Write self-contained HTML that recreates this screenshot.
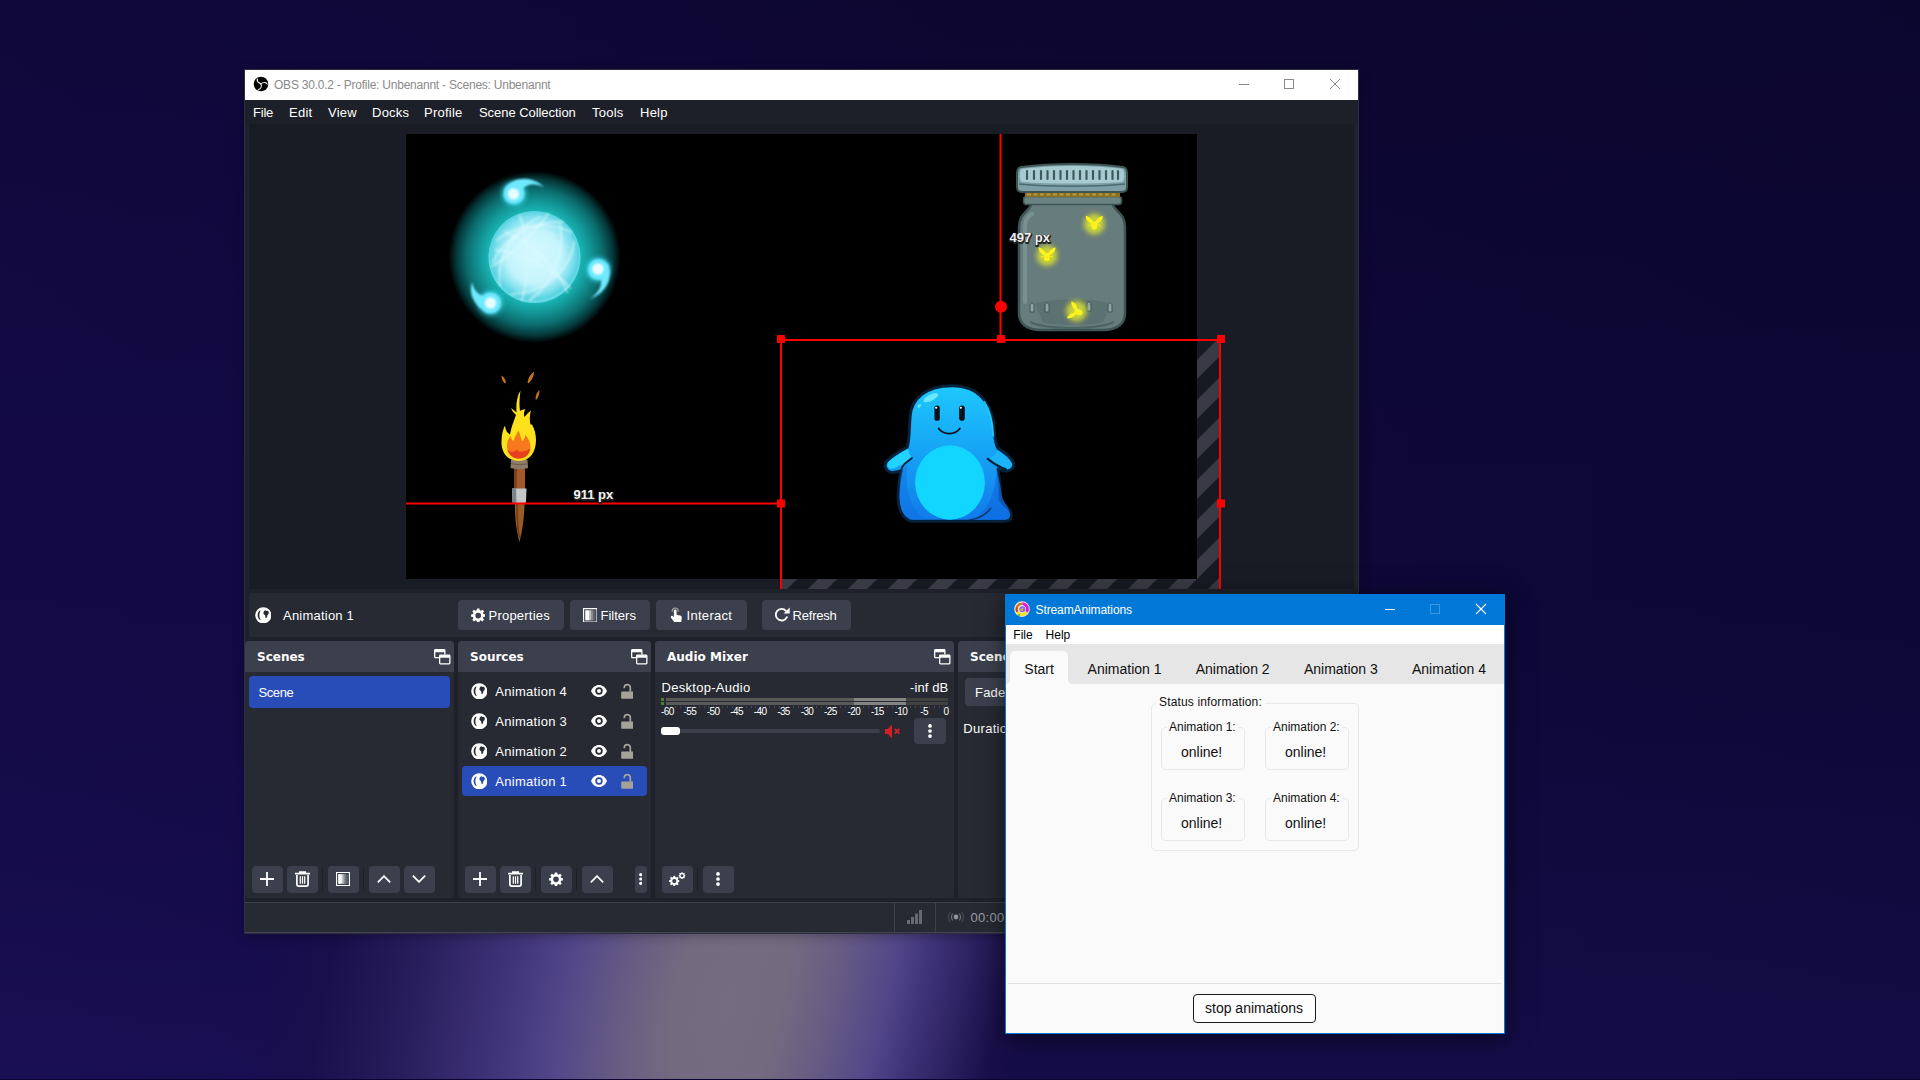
<!DOCTYPE html>
<html lang="en">
<head>
<meta charset="utf-8">
<title>OBS 30.0.2 - StreamAnimations</title>
<style>
*{box-sizing:border-box;margin:0;padding:0}
html,body{width:1920px;height:1080px;overflow:hidden}
body{position:relative;background:#0e0736;font-family:"Liberation Sans",sans-serif;color:#fff}
.abs,.t,.btn,.tb,.dock,.dtitle{position:absolute}
.t{white-space:nowrap;line-height:1}
/* desktop */
#desk{position:absolute;left:0;top:0;width:1920px;height:1080px;overflow:hidden;
 background:linear-gradient(to bottom, rgba(5,2,20,.22) 0, rgba(5,2,20,0) 45%, rgba(60,45,170,0) 55%, rgba(60,45,170,.13) 100%),linear-gradient(to right, #130a45 0, #120943 20%, #0f0839 50%, #0d0736 100%);}
#beam{position:absolute;left:226px;top:105px;width:1000px;height:1800px;transform:rotate(14deg)}
#beamL{position:absolute;left:0;top:0;width:502px;height:1800px;background:radial-gradient(ellipse 450px 880px at 500px 50%, #756c81 0, #736a80 12%, #675d83 22%, #524689 36%, #3f3378 49%, #2a1f5e 67%, rgba(28,17,73,.5) 88%, rgba(19,10,64,0) 100%)}
#beamR{position:absolute;left:500px;top:0;width:500px;height:1800px;background:radial-gradient(ellipse 300px 880px at 0% 50%, #756c81 0, #736a80 18%, #675d83 33%, #524689 52%, #3f3378 63%, #2a1f5e 78%, rgba(28,17,73,.5) 90%, rgba(17,9,60,0) 100%)}
#deskline{position:absolute;left:0;top:1079px;width:1920px;height:1px;background:#0c0432}
/* OBS window */
#obs{overflow:hidden;position:absolute;left:244px;top:69px;width:1115px;height:865px;background:#1f212a;border:1px solid #2c2e40;box-shadow:0 2px 10px rgba(0,0,0,.28)}
#obs .in{position:absolute;left:-245px;top:-70px;width:1920px;height:1080px}
.obt{font-size:13px;color:#fefefe;letter-spacing:.25px}
.dock{background:#272a33;border-radius:4px}
.dtitle{background:#3c404d;border-radius:4px 4px 0 0;height:31px;left:0;top:0;width:100%}
.dt{font-family:"DejaVu Sans",sans-serif;font-weight:bold;font-size:12px;color:#fefefe}
.ml{font-size:10px;color:#fefefe;letter-spacing:-.6px}
.btn{background:#3c404d;border-radius:4px}
.tb{background:#3c404d;border-radius:4px;width:31px;height:27px;top:866px}
.sep{position:absolute;width:1px;background:#1d1f27;top:868px;height:23px}
/* StreamAnimations */
#sa{overflow:hidden;position:absolute;left:1005px;top:594px;width:500px;height:440px;background:#fafafa;border:1px solid #0078d7;box-shadow:0 4px 22px rgba(0,0,0,.55)}
#sa .in{position:absolute;left:-1006px;top:-595px;width:1920px;height:1080px;color:#111}
</style>
</head>
<body>
<div id="desk"><div id="beam"><div id="beamL"></div><div id="beamR"></div></div><div id="deskline"></div></div>
<svg width="0" height="0" style="position:absolute"><defs>
<symbol id="i-globe" viewBox="0 0 17 17"><path fill-rule="evenodd" d="M8.500.200a8.300 8.300 0 1 0 0 16.600a8.300 8.300 0 1 0 0-16.600zM4.400 3.900C2.100 6.700 2.100 10.500 4.800 13.100L6 13.100C4 10.300 4 6.800 5.700 3.900zM9.300 4.100L10.800 3.300L12.200 4.200L13.300 3.800L14.300 6L13.500 7.700L12.700 8.300L12.300 10.800L10.900 11.200L10.300 8.500L8.600 7L8.800 5.300z"/></symbol>
<symbol id="i-gear" viewBox="0 0 16 16"><path fill-rule="evenodd" d="M6.700.500h2.600l.4 2.100l1.200.5l1.800-1.200l1.800 1.800l-1.200 1.800l.5 1.200l2.100.4v2.600l-2.100.4l-.5 1.200l1.200 1.800l-1.800 1.800l-1.800-1.200l-1.200.5l-.4 2.100H6.700l-.4-2.100l-1.200-.5l-1.800 1.200l-1.800-1.800l1.200-1.800l-.5-1.200L.1 9.700V7.100l2.100-.4l.5-1.200l-1.200-1.800l1.800-1.800l1.800 1.200l1.200-.5zM8 5.200a3.200 3.200 0 1 0 0 6.400a3.200 3.200 0 1 0 0-6.400z"/></symbol>
<symbol id="i-filter" viewBox="0 0 15 15"><path fill-rule="evenodd" d="M0 0h15v15H0zM1.200 1.200v12.600h12.600V1.200z"/><rect x="2.300" y="2.300" width="4" height="10.400"/><rect x="6.300" y="2.300" width="2" height="10.400" opacity=".7"/><rect x="8.300" y="2.300" width="2" height="10.400" opacity=".4"/><rect x="10.300" y="2.300" width="2.400" height="10.400" opacity=".18"/></symbol>
<symbol id="i-hand" viewBox="0 0 14 17"><path d="M4.200 4.200a1.500 1.500 0 0 1 3 0v4.300l3.800.8c1.300.3 2 1.100 1.900 2.400l-.5 4.300c-.1.500-.4.800-.9.800H5.600c-.5 0-.9-.2-1.200-.6L1.100 11.800c-.5-.7-.3-1.500.3-1.900c.6-.4 1.300-.3 1.800.2l1 1z"/><path d="M2.500 5.200a3.300 3.300 0 1 1 6.400 0" fill="none" stroke-width="1.300" stroke="currentColor" opacity=".55"/></symbol>
<symbol id="i-refresh" viewBox="0 0 17 16"><path d="M13.300 10.500A6 6 0 1 1 12.300 3.900" fill="none" stroke="currentColor" stroke-width="1.900" stroke-linecap="round"/><path d="M16.200.500v6.200h-6.200z"/></symbol>
<symbol id="i-float" viewBox="0 0 17 16"><g fill="none" stroke="currentColor" stroke-width="1.300"><rect x=".65" y=".65" width="10.200" height="8" rx=".8"/></g><rect x=".65" y=".65" width="10.200" height="2.600"/><rect x="5" y="5.500" width="11.500" height="10" rx="1" fill="#3c404d"/><g fill="none" stroke="currentColor" stroke-width="1.300"><rect x="5.650" y="6.150" width="10.200" height="8.700" rx=".8"/></g><rect x="5.650" y="6.150" width="10.200" height="2.600"/></symbol>
<symbol id="i-eye" viewBox="0 0 16 12"><path fill-rule="evenodd" d="M8 0C4.400 0 1.500 2.300 0 6c1.500 3.700 4.400 6 8 6s6.500-2.300 8-6C14.500 2.300 11.600 0 8 0zM8 2.300a3.700 3.700 0 1 0 0 7.400a3.700 3.700 0 1 0 0-7.400z"/><circle cx="8" cy="6" r="2"/></symbol>
<symbol id="i-lock" viewBox="0 0 13 16"><rect x=".2" y="8.500" width="12.600" height="7.500" rx="1"/><path d="M3.400 5.200V4.500a3.100 3.100 0 0 1 6.200 0v4.500" fill="none" stroke="currentColor" stroke-width="1.800"/></symbol>
<symbol id="i-plus" viewBox="0 0 14 14"><path d="M7 0v14M0 7h14" stroke="currentColor" stroke-width="1.800" fill="none"/></symbol>
<symbol id="i-trash" viewBox="0 0 15 16"><path d="M0 2.600h15M4.800 2.600V1h5.400v1.600" fill="none" stroke="currentColor" stroke-width="1.700"/><path d="M1.900 4v9.200c0 1.100.7 1.900 1.900 1.900h7.400c1.200 0 1.900-.8 1.900-1.900V4" fill="none" stroke="currentColor" stroke-width="1.700"/><path d="M5.300 5.300v7.400M7.500 5.300v7.400M9.700 5.300v7.400" stroke="currentColor" stroke-width="1.250"/></symbol>
<symbol id="i-up" viewBox="0 0 14 8"><path d="M.800 7.300L7 1.100l6.200 6.200" fill="none" stroke="currentColor" stroke-width="1.700"/></symbol>
<symbol id="i-down" viewBox="0 0 14 8"><path d="M.800.700L7 6.900L13.200.700" fill="none" stroke="currentColor" stroke-width="1.700"/></symbol>
<symbol id="i-dots" viewBox="0 0 4 14"><circle cx="2" cy="1.900" r="1.850"/><circle cx="2" cy="7" r="1.850"/><circle cx="2" cy="12.100" r="1.850"/></symbol>
<symbol id="i-gears" viewBox="0 0 17 14"><g transform="translate(0 3.500) scale(.66)"><use href="#i-gear" width="16" height="16"/></g><g transform="translate(9.500 0) scale(.44)"><use href="#i-gear" width="16" height="16"/></g></symbol>
<symbol id="i-mute" viewBox="0 0 16 15"><path d="M0 5h2.800L7 .500v14L2.800 10H0z" fill="#d21f28"/><path d="M9.800 5l4.600 4.600M14.400 5L9.800 9.600" stroke="#d21f28" stroke-width="1.900" fill="none"/></symbol>
</defs></svg>

<div id="obs"><div class="in">
<!--OBS-TITLE-->
<div class="abs" style="left:245px;top:70px;width:1113px;height:30px;background:#fff"></div>
<svg class="abs" style="left:253px;top:76px" width="16" height="16" viewBox="0 0 16 16"><circle cx="8" cy="8" r="7.300" fill="#050505"/><g fill="none" stroke="#e4e4e4" stroke-width="1.300" stroke-linecap="round"><path d="M8 8C7 7 5 6.500 4.500 5.500C4.300 4.800 4.300 4 4.400 3.200"/><path d="M8 8C9 6.800 11 6.400 12.500 6.600C13.500 6.800 14 7.500 14.200 8.200" stroke-width="1.100"/><path d="M8 8C8.500 9.500 8.600 10.500 8 11.500C7.300 12.600 6.300 13.300 5.200 13.800" stroke-width="1.100"/></g></svg>
<div class="t" id="obstitle" style="left:274px;top:79px;font-size:12px;color:#8a8a8a;letter-spacing:-.23px">OBS 30.0.2 - Profile: Unbenannt - Scenes: Unbenannt</div>
<svg class="abs" style="left:1234px;top:74px" width="112" height="20" viewBox="0 0 112 20" fill="none" stroke="#8a8a8a" stroke-width="1"><path d="M5 10.500h10"/><rect x="50.500" y="5.500" width="9" height="9"/><path d="M96 5l10 10M106 5l-10 10"/></svg>
<div class="abs" style="left:245px;top:100px;width:1113px;height:24px;background:#1e2029"></div>
<div class="t obt m" style="left:253px;top:106px;letter-spacing:-.2px">File</div>
<div class="t obt m" style="left:289px;top:106px">Edit</div>
<div class="t obt m" style="left:328px;top:106px">View</div>
<div class="t obt m" style="left:372px;top:106px">Docks</div>
<div class="t obt m" style="left:424px;top:106px">Profile</div>
<div class="t obt m" style="left:479px;top:106px;letter-spacing:-.05px">Scene Collection</div>
<div class="t obt m" style="left:592px;top:106px">Tools</div>
<div class="t obt m" style="left:640px;top:106px">Help</div>
<!--OBS-PREVIEW-->
<svg class="abs" style="left:245px;top:124px" width="1113" height="465" viewBox="245 124 1113 465">
<defs>
<pattern id="hatch" patternUnits="userSpaceOnUse" width="40" height="40" patternTransform="translate(37 0)"><rect width="40" height="40" fill="#181a23"/><path d="M0 0h19L0 19zM40 0v19L19 40H0z" fill="#393a45"/></pattern>
<radialGradient id="glow" cx="50%" cy="50%" r="50%"><stop offset="0" stop-color="#1cc0c0"/><stop offset=".54" stop-color="#18b2b2"/><stop offset=".66" stop-color="#129394"/><stop offset=".79" stop-color="#0c6c6e"/><stop offset=".91" stop-color="#05383a"/><stop offset="1" stop-color="#000"/></radialGradient>
<radialGradient id="orb" cx="50%" cy="48%" r="50%"><stop offset="0" stop-color="#d6f9ff"/><stop offset=".6" stop-color="#b2effa"/><stop offset=".84" stop-color="#7fe0ed"/><stop offset=".95" stop-color="#5ad3e1"/><stop offset="1" stop-color="#66d9e6"/></radialGradient>
<filter id="b1" x="-50%" y="-50%" width="200%" height="200%"><feGaussianBlur stdDeviation="1.200"/></filter>
<filter id="b2" x="-50%" y="-50%" width="200%" height="200%"><feGaussianBlur stdDeviation="2.500"/></filter>
<filter id="b4" x="-100%" y="-100%" width="300%" height="300%"><feGaussianBlur stdDeviation="4"/></filter>
<linearGradient id="slime" x1="0" y1="0" x2="0" y2="1"><stop offset="0" stop-color="#1ec8fc"/><stop offset=".45" stop-color="#17a6f6"/><stop offset="1" stop-color="#1279ea"/></linearGradient>
</defs>
<rect x="245" y="124" width="1113" height="465" fill="#20222b"/><rect x="249" y="124" width="1105" height="465" fill="#191b25"/>
<rect x="406" y="134" width="791" height="445" fill="#000"/>
<path d="M1197 341h22v248H782v-10h415z" fill="url(#hatch)"/>
<!--ORB-->
<circle cx="534.500" cy="257" r="86" fill="url(#glow)"/>
<circle cx="534.500" cy="257" r="46" fill="url(#orb)"/>
<g fill="none" stroke="#e9fdff" stroke-opacity=".5" stroke-width="2.200" stroke-linecap="round" filter="url(#b1)">
<path d="M497 240c18-14 50-20 74-8"/><path d="M493 262c10-22 40-42 70-40"/><path d="M500 285c-4-28 14-56 40-68"/>
<path d="M512 294c26 0 58-20 62-52"/><path d="M530 300c20-14 36-44 30-76"/><path d="M505 232c22 8 52 34 62 60"/>
<path d="M496 250c30 4 62 22 74 38"/><path d="M520 216c8 26 10 58 2 84"/><path d="M548 214c-14 20-40 44-56 52"/>
</g>
<circle cx="534.500" cy="257" r="30" fill="#d6f9ff" opacity=".55" filter="url(#b4)"/>
<g filter="url(#b2)" fill="#3fe0f8" opacity=".75"><circle cx="514" cy="193.500" r="12"/><circle cx="598.500" cy="269.500" r="12"/><circle cx="490.500" cy="303" r="12"/></g>
<g filter="url(#b1)">
<g fill="#6eeaff"><circle cx="514" cy="193.500" r="10.500"/><path d="M505 188c8-11 26-13 39-1c-9-4-18-4-24 5z"/></g>
<circle cx="513.500" cy="194" r="5.500" fill="#e8fdff"/>
<g fill="#6eeaff"><circle cx="598.500" cy="269.500" r="10.500"/><path d="M608 263c5 14 0 29-18 36c9-7 12-13 11-21z"/></g>
<circle cx="598" cy="269" r="5.500" fill="#e8fdff"/>
<g fill="#6eeaff"><circle cx="490.500" cy="303" r="10.500"/><path d="M481 309c-9-8-12-17-9-27c2 9 7 14 16 15z"/></g>
<circle cx="490.500" cy="303" r="5.500" fill="#e8fdff"/>
</g>
<!--JAR-->
<g>
<!-- body -->
<path d="M1032 203h80c2 8 13 10 13 24v86c0 10-6 16-20 17h-66c-14-1-20-7-20-17v-86c0-14 11-16 13-24z" fill="#677c7c" stroke="#3e5555" stroke-width="2.500"/>
<path d="M1032 214c-6 3-7 8-7 16v72" fill="none" stroke="#7f9696" stroke-width="4" stroke-linecap="round" opacity=".8"/>
<path d="M1035 304c10-6 64-6 76 0l-8 18c-12 4-48 4-60 0z" fill="#5b7070" opacity=".9"/>
<g fill="#8ea4a4" stroke="#3e5555" stroke-width="1"><path d="M1030 312v-6c0-4 4-4 4 0v6zM1045 312v-6c0-4 4-4 4 0v6zM1073 311v-6c0-4 4-4 4 0v6zM1087 311v-6c0-4 4-4 4 0v6zM1108 312v-6c0-4 4-4 4 0v6z"/></g>
<path d="M1030 322c18 8 66 8 84 0" fill="none" stroke="#4d6464" stroke-width="2"/>
<!-- neck ring -->
<rect x="1023.500" y="196.500" width="98" height="8" rx="3" fill="#6b8383" stroke="#3e5555" stroke-width="1.500"/>
<!-- gold band -->
<rect x="1025" y="192" width="95" height="5" fill="#8a6f23"/>
<path d="M1027 194.500h91" stroke="#b79a3a" stroke-width="2" stroke-dasharray="4 2.500"/>
<!-- lid -->
<path d="M1021 167c30-4 74-4 102 0c4 1 4 4 4 8v12c0 4-2 5-6 5h-98c-4 0-6-1-6-5v-12c0-4 0-7 4-8z" fill="#7e9fa5" stroke="#3e5555" stroke-width="2"/>
<path d="M1022 169c30-4 72-4 100 0c3 1 3 12 0 13c-30 2-70 2-100 0c-3-1-3-12 0-13z" fill="#a6ccd2"/>
<path d="M1019 184c30 3 76 3 106 0" fill="none" stroke="#4c6b70" stroke-width="1.500"/>
<path d="M1027 171v8M1034 171v8M1041 171v8M1047.500 171v8M1054 171v8M1060.500 171v8M1067 171v8M1073.500 171v8M1080 171v8M1086.500 171v8M1093 171v8M1099.500 171v8M1106 171v8M1112.500 171v8M1118 171v8" stroke="#3e5a5e" stroke-width="2.200" stroke-linecap="round"/>
<!-- fireflies -->
<g filter="url(#b2)" fill="#d8e032" opacity=".85"><circle cx="1094.300" cy="224" r="10.500"/><circle cx="1047" cy="255.500" r="10.500"/><circle cx="1076.500" cy="311" r="10.500"/></g>
<g fill="#fff21c">
<g transform="translate(1094.300 223)"><ellipse cx="0" cy="2.500" rx="3" ry="4.200"/><path d="M-1-1c-3-5-6-6-7.500-6c0 4 3 7 7 8zM1-1c3-5 6-6 7.500-6c0 4-3 7-7 8z"/><path d="M-2.500 1.500l-3.500 1M2.500 1.500l3.500 1" stroke="#fff21c" stroke-width="1"/></g>
<g transform="translate(1047 254.500)"><ellipse cx="0" cy="2.500" rx="3" ry="4.200"/><path d="M-1-1c-3-5-6-6-7.500-6c0 4 3 7 7 8zM1-1c3-5 6-6 7.500-6c0 4-3 7-7 8z"/><path d="M-2.500 1.500l-3.500 1M2.500 1.500l3.500 1" stroke="#fff21c" stroke-width="1"/></g>
<g transform="translate(1076 311.500) rotate(-75)"><ellipse cx="0" cy="2.500" rx="3" ry="4.200"/><path d="M-1-1c-3-5-6-6-7.500-6c0 4 3 7 7 8zM1-1c3-5 6-6 7.500-6c0 4-3 7-7 8z"/></g>
</g>
</g>
<!--TORCH-->
<g>
<path d="M515 504l9.500 0c0 12-2 26-5 38c-3-10-5-26-4.500-38z" fill="#9a5a26"/>
<path d="M517 504c0 12 .5 24 2.500 34" stroke="#6f3d18" stroke-width="1.500" fill="none"/>
<rect x="514" y="468" width="11" height="21" fill="#a4592b"/>
<rect x="514" y="468" width="3" height="21" fill="#7d401c"/>
<path d="M512 488.500h14.500l-.5 14c-4 1.500-9.500 1.500-13.500 0z" fill="#c3c8cc"/>
<path d="M512 488.500h4l.5 15c-2-.3-3-.6-4-1z" fill="#7c8389"/>
<path d="M511 460c4-1.500 12.500-1.500 16.500 0l.5 8c-5 1.500-12.500 1.500-17.500 0z" fill="#8b7b68"/>
<path d="M511 463.500c5 1.500 12 1.500 17 0" stroke="#6a5c4c" stroke-width="1" fill="none"/>
<!-- flame -->
<path d="M519 461C507 461 501 452 501.500 441C501.800 434 503 429 505 425.500C505.500 430 507 433 510 434.500C511 427 514 421 516 415C514 413 512 411 511 408C513 409.500 515 411 516.500 412.500C516 405 516.500 397 520.500 390.500C519.500 397 519 404 520 411C521.500 410 523.500 409.500 525.500 409C524 411.500 523.500 414 524.500 417C526.500 414.500 528.500 412.500 531 410.500C529.500 415 529.500 420 530.500 424.500C531 424.500 531.500 424.500 532 424.500C534.500 429 536 434 536 440C536 452 530 461 519 461Z" fill="#fde11c"/>
<path d="M519 458.500C511 458.500 507 452.500 507 446C507 441.500 508.500 438.500 510.500 436C511 438.500 512 440 513.500 441C514.500 437 517 434 518.500 430.500C520.500 434.500 520.500 438.500 522.500 441.500C524 439.500 525 437.500 525.500 435C528.500 438.500 530.500 442 530.500 447C530.500 453 526.500 458.500 519 458.500Z" fill="#f7781d"/>
<path d="M519 458.500C512 458.500 508.500 454 507.500 449.500C510.500 453 514 452.500 516.500 449.500C519 452.500 524 453 530 448.500C529.500 454 526 458.500 519 458.500Z" fill="#e9401f"/>
<path d="M501.500 375.500c2.500 1.500 4 4 4.500 7.500l-1.500 0c-2-2-3-4.500-3-7.500zM534 371.500c-3.500 2.500-6 6.500-6.500 11.500l1.500 0c3-3 5-7 5-11.500zM539.500 390c-2.500 2-4 5-4 9.500l1 0c2-2.500 3-5.500 3-9.500z" fill="#c1761b"/>
</g>
<!--SLIME-->
<g transform="translate(860 370) scale(.15734)">
<path d="M585 100C760 100 850 220 855 400C858 440 862 470 875 495C915 520 965 560 975 590C985 625 950 650 910 640C895 636 885 632 878 628C885 690 895 750 890 810C888 830 900 845 920 860C945 880 962 900 962 925C962 950 945 962 915 962L330 962C270 950 240 880 242 800C244 740 250 690 262 640C235 650 215 655 195 650C160 640 150 605 170 580C195 550 245 520 300 490C315 440 312 380 318 300C325 180 420 100 585 100Z" fill="url(#slime)" stroke="#05223a" stroke-width="19" stroke-linejoin="round"/>
<path d="M870 630C885 700 898 770 903 805C912 840 945 870 952 905C955 940 935 952 900 952L700 952C800 920 860 800 870 630Z" fill="#0f6ee0" opacity=".75"/>
<path d="M262 640C255 690 250 740 250 800C250 870 280 940 335 952L420 952C330 900 280 780 300 600Z" fill="#0f6ee0" opacity=".45"/>
<path d="M180 585C210 555 260 525 305 500C310 525 318 545 330 560C290 590 240 620 200 630C175 625 168 600 180 585Z" fill="#23d3ff"/>
<path d="M965 592C940 560 900 530 872 510C862 535 845 550 812 565C850 595 890 620 925 630C955 632 972 612 965 592Z" fill="#1cb4f8"/>
<path d="M812 565C850 595 890 620 925 630" fill="none" stroke="#05223a" stroke-width="14" stroke-linecap="round"/>
<path d="M330 560C290 590 262 610 262 640" fill="none" stroke="#05223a" stroke-width="12" stroke-linecap="round"/>
<ellipse cx="572" cy="715" rx="222" ry="236" fill="#12d6ff"/>
<path d="M700 952C750 945 800 920 830 880" fill="none" stroke="#05223a" stroke-width="10" stroke-linecap="round" opacity=".7"/>
<rect x="473" y="225" width="34" height="98" rx="17" fill="#0a1018"/><rect x="630" y="225" width="36" height="98" rx="18" fill="#0a1018"/>
<circle cx="484" cy="240" r="7" fill="#fff"/><circle cx="641" cy="240" r="7" fill="#fff"/>
<path d="M500 372C530 415 605 415 635 372" fill="none" stroke="#0a1018" stroke-width="11" stroke-linecap="round"/>
<ellipse cx="450" cy="176" rx="52" ry="20" transform="rotate(-27 450 176)" fill="#6be7ff"/>
<ellipse cx="377" cy="228" rx="14" ry="8" transform="rotate(-45 377 228)" fill="#6be7ff"/>
<path d="M790 200C830 260 845 330 848 420" fill="none" stroke="#2ee0ff" stroke-width="10" stroke-linecap="round" opacity=".8"/>
</g>
<!--SEL-->
<g fill="#ff0000">
<rect x="999.500" y="134" width="2" height="206"/>
<rect x="406" y="502.500" width="375" height="2"/>
<rect x="780" y="339" width="441" height="2"/>
<rect x="780" y="339" width="2" height="250"/>
<rect x="1219" y="339" width="2" height="250"/>
<circle cx="1001" cy="306.800" r="6"/>
<rect x="777" y="335" width="8" height="8"/><rect x="997" y="335" width="8" height="8"/><rect x="1217" y="335" width="8" height="8"/>
<rect x="777" y="499.500" width="8" height="8"/><rect x="1217" y="499.500" width="8" height="8"/>
</g>
<g font-family="Liberation Sans, sans-serif" font-weight="bold" font-size="13" >
<text x="574" y="499.500" fill="#1a1a1a" stroke="#222" stroke-width="2.200" stroke-linejoin="round" opacity=".9">911 px</text>
<text x="573.500" y="498.500" fill="#f2f2f2">911 px</text>
<text x="1010" y="242.500" fill="#1a1a1a" stroke="#222" stroke-width="2.200" stroke-linejoin="round" opacity=".9">497 px</text>
<text x="1009.500" y="241.500" fill="#f2f2f2">497 px</text>
</g>
</svg>
<!--OBS-CONTEXT-->
<div class="abs" style="left:249px;top:593px;width:1105px;height:44px;background:#272a33;border-radius:4px"></div>
<svg class="abs" style="left:254.700px;top:606.700px;color:#fefefe" width="16.600" height="16.600" fill="#fefefe"><use href="#i-globe"/></svg>
<div class="t obt c" style="left:283px;top:609px;letter-spacing:.22px">Animation 1</div>
<div class="btn" style="left:458px;top:600px;width:106px;height:30px"></div>
<svg class="abs" style="left:470.600px;top:607.800px" width="14.400" height="14.400" fill="#fefefe"><use href="#i-gear"/></svg>
<div class="t obt c" style="left:488.500px;top:609px;letter-spacing:.22px">Properties</div>
<div class="btn" style="left:570px;top:600px;width:80px;height:30px"></div>
<svg class="abs" style="left:582.700px;top:607.700px" width="14.600" height="14.600" fill="#fefefe"><use href="#i-filter"/></svg>
<div class="t obt c" style="left:600.500px;top:609px;letter-spacing:0px">Filters</div>
<div class="btn" style="left:656px;top:600px;width:91px;height:30px"></div>
<svg class="abs" style="left:669.500px;top:606.500px;color:#fefefe" width="12.800" height="15.500" fill="#fefefe"><use href="#i-hand"/></svg>
<div class="t obt c" style="left:686.500px;top:609px;letter-spacing:.3px">Interact</div>
<div class="btn" style="left:762px;top:600px;width:89px;height:30px"></div>
<svg class="abs" style="left:773.500px;top:607px;color:#fefefe" width="16.500" height="15.500" fill="#fefefe"><use href="#i-refresh"/></svg>
<div class="t obt c" style="left:792.500px;top:609px;letter-spacing:-.2px">Refresh</div>
<!--OBS-DOCKS-->
<div class="dock" style="left:245px;top:641px;width:209px;height:257px"><div class="dtitle"></div></div>
<div class="t dt" id="dt1" style="left:257px;top:651px">Scenes</div>
<svg class="abs" style="left:434px;top:649px;color:#fefefe" width="17" height="16" fill="#fefefe"><use href="#i-float"/></svg>
<div class="dock" style="left:458px;top:641px;width:193px;height:257px"><div class="dtitle"></div></div>
<div class="t dt" id="dt2" style="left:470px;top:651px">Sources</div>
<svg class="abs" style="left:631px;top:649px;color:#fefefe" width="17" height="16" fill="#fefefe"><use href="#i-float"/></svg>
<div class="dock" style="left:655px;top:641px;width:299px;height:257px"><div class="dtitle"></div></div>
<div class="t dt" id="dt3" style="left:667px;top:651px">Audio Mixer</div>
<svg class="abs" style="left:934px;top:649px;color:#fefefe" width="17" height="16" fill="#fefefe"><use href="#i-float"/></svg>
<div class="dock" style="left:958px;top:641px;width:200px;height:257px"><div class="dtitle"></div></div>
<div class="t dt" id="dt4" style="left:970px;top:651px">Scene Transitions</div>
<svg class="abs" style="left:1138px;top:649px;color:#fefefe" width="17" height="16" fill="#fefefe"><use href="#i-float"/></svg>
<div class="abs" style="left:249px;top:676px;width:201px;height:32px;background:#284cb8;border-radius:4px"></div>
<div class="t obt r" style="left:258.500px;top:685.600px;letter-spacing:-.4px">Scene</div>
<div class="abs" style="left:462px;top:766px;width:185px;height:30px;background:#284cb8;border-radius:4px"></div>
<svg class="abs" style="left:470.700px;top:682.7px" width="16.600" height="16.600" fill="#fefefe"><use href="#i-globe"/></svg>
<div class="t obt r" style="left:495.200px;top:684.7px;letter-spacing:.3px">Animation 4</div>
<svg class="abs" style="left:591px;top:685px" width="16" height="12" fill="#fefefe"><use href="#i-eye"/></svg>
<svg class="abs" style="left:620.600px;top:683px;color:#a5a299" width="12.600" height="16" fill="#a5a299"><use href="#i-lock"/></svg>
<svg class="abs" style="left:470.700px;top:712.7px" width="16.600" height="16.600" fill="#fefefe"><use href="#i-globe"/></svg>
<div class="t obt r" style="left:495.200px;top:714.7px;letter-spacing:.3px">Animation 3</div>
<svg class="abs" style="left:591px;top:715px" width="16" height="12" fill="#fefefe"><use href="#i-eye"/></svg>
<svg class="abs" style="left:620.600px;top:713px;color:#a5a299" width="12.600" height="16" fill="#a5a299"><use href="#i-lock"/></svg>
<svg class="abs" style="left:470.700px;top:742.7px" width="16.600" height="16.600" fill="#fefefe"><use href="#i-globe"/></svg>
<div class="t obt r" style="left:495.200px;top:744.7px;letter-spacing:.3px">Animation 2</div>
<svg class="abs" style="left:591px;top:745px" width="16" height="12" fill="#fefefe"><use href="#i-eye"/></svg>
<svg class="abs" style="left:620.600px;top:743px;color:#a5a299" width="12.600" height="16" fill="#a5a299"><use href="#i-lock"/></svg>
<svg class="abs" style="left:470.700px;top:772.7px" width="16.600" height="16.600" fill="#fefefe"><use href="#i-globe"/></svg>
<div class="t obt r" style="left:495.200px;top:774.7px;letter-spacing:.3px">Animation 1</div>
<svg class="abs" style="left:591px;top:775px" width="16" height="12" fill="#fefefe"><use href="#i-eye"/></svg>
<svg class="abs" style="left:620.600px;top:773px;color:#a5a299" width="12.600" height="16" fill="#a5a299"><use href="#i-lock"/></svg>
<div class="tb" style="left:252px;width:31px"></div><svg class="abs" style="left:260px;top:872px;color:#fefefe" width="14" height="14" fill="#fefefe"><use href="#i-plus"/></svg>
<div class="tb" style="left:287px;width:31px"></div><svg class="abs" style="left:295px;top:871px;color:#fefefe" width="15" height="16" fill="#fefefe"><use href="#i-trash"/></svg>
<div class="sep" style="left:322px"></div><div class="tb" style="left:328px;width:31px"></div><svg class="abs" style="left:336px;top:872px;color:#fefefe" width="14" height="14" fill="#fefefe"><use href="#i-filter"/></svg>
<div class="sep" style="left:363px"></div><div class="tb" style="left:369px;width:31px"></div><svg class="abs" style="left:377px;top:875px;color:#fefefe" width="14" height="8" fill="#fefefe"><use href="#i-up"/></svg>
<div class="tb" style="left:404px;width:31px"></div><svg class="abs" style="left:412px;top:875px;color:#fefefe" width="14" height="8" fill="#fefefe"><use href="#i-down"/></svg>
<div class="tb" style="left:465px;width:31px"></div><svg class="abs" style="left:473px;top:872px;color:#fefefe" width="14" height="14" fill="#fefefe"><use href="#i-plus"/></svg>
<div class="tb" style="left:500px;width:31px"></div><svg class="abs" style="left:508px;top:871px;color:#fefefe" width="15" height="16" fill="#fefefe"><use href="#i-trash"/></svg>
<div class="sep" style="left:535px"></div><div class="tb" style="left:541px;width:31px"></div><svg class="abs" style="left:549px;top:872px;color:#fefefe" width="14" height="14" fill="#fefefe"><use href="#i-gear"/></svg>
<div class="sep" style="left:576px"></div><div class="tb" style="left:582px;width:31px"></div><svg class="abs" style="left:590px;top:875px;color:#fefefe" width="14" height="8" fill="#fefefe"><use href="#i-up"/></svg>
<div class="tb" style="left:635px;width:12px"></div><svg class="abs" style="left:638.8px;top:873px;color:#fefefe" width="3.4" height="12" fill="#fefefe"><use href="#i-dots"/></svg>
<div class="tb" style="left:662px;width:31px"></div><svg class="abs" style="left:668.5px;top:872px;color:#fefefe" width="17" height="14" fill="#fefefe"><use href="#i-gears"/></svg>
<div class="sep" style="left:697px"></div><div class="tb" style="left:703px;width:31px"></div><svg class="abs" style="left:716px;top:872px;color:#fefefe" width="4" height="14" fill="#fefefe"><use href="#i-dots"/></svg>
<div class="t obt r" style="left:661.500px;top:681px;letter-spacing:.28px">Desktop-Audio</div>
<div class="t obt r" id="infdb" style="left:910px;top:681px;letter-spacing:.1px">-inf dB</div>
<div class="abs" style="left:661px;top:698px;width:3px;height:3px;background:#4c7f26"></div><div class="abs" style="left:661px;top:702px;width:3px;height:3px;background:#4c7f26"></div>
<div class="abs" style="left:666px;top:698px;width:282px;height:3px;background:linear-gradient(to right,#595959 0,#595959 188px,#848484 188px,#848484 240px,#414141 240px)"></div>
<div class="abs" style="left:666px;top:702px;width:282px;height:3px;background:linear-gradient(to right,#595959 0,#595959 188px,#848484 188px,#848484 240px,#414141 240px)"></div>
<div class="abs" style="left:666px;top:706px;width:283px;height:2px;background:repeating-linear-gradient(to right,#8a8d96 0,#8a8d96 1px,transparent 1px,transparent 4.700px);opacity:.32"></div>

<div class="t ml" style="left:661px;top:707px">-60</div><div class="t ml" style="left:669.8px;width:40px;text-align:center;top:707px">-55</div><div class="t ml" style="left:693.2px;width:40px;text-align:center;top:707px">-50</div><div class="t ml" style="left:716.6px;width:40px;text-align:center;top:707px">-45</div><div class="t ml" style="left:740.1px;width:40px;text-align:center;top:707px">-40</div><div class="t ml" style="left:763.5px;width:40px;text-align:center;top:707px">-35</div><div class="t ml" style="left:787.0px;width:40px;text-align:center;top:707px">-30</div><div class="t ml" style="left:810.4px;width:40px;text-align:center;top:707px">-25</div><div class="t ml" style="left:833.9px;width:40px;text-align:center;top:707px">-20</div><div class="t ml" style="left:857.3px;width:40px;text-align:center;top:707px">-15</div><div class="t ml" style="left:880.8px;width:40px;text-align:center;top:707px">-10</div><div class="t ml" style="left:904.2px;width:40px;text-align:center;top:707px">-5</div><div class="t ml" style="right:971.6px;top:707px">0</div>
<div class="abs" style="left:661px;top:729px;width:219px;height:4px;border-radius:2px;background:#3c404d"></div>
<div class="abs" style="left:661px;top:727px;width:19px;height:8px;border-radius:3px;background:#fefefe"></div>
<svg class="abs" style="left:884.500px;top:724px" width="16" height="15"><use href="#i-mute"/></svg>
<div class="btn" style="left:914px;top:718px;width:32px;height:26px"></div><svg class="abs" style="left:928px;top:724px" width="4" height="14" fill="#fefefe"><use href="#i-dots"/></svg>
<div class="btn" style="left:965px;top:678px;width:120px;height:28px"></div>
<div class="t obt r" style="left:975px;top:685.800px;letter-spacing:.2px">Fade</div>
<div class="t obt r" style="left:963.300px;top:722px;letter-spacing:.3px">Duration</div>
<!--OBS-STATUS-->
<div class="abs" style="left:245px;top:902px;width:1113px;height:31px;background:#272a33;border-top:1px solid #3c404d"></div>
<div class="abs" style="left:245px;top:932px;width:1113px;height:1px;background:#41444f"></div>
<div class="abs" style="left:894px;top:903px;width:1px;height:29px;background:#3c404d"></div>
<div class="abs" style="left:935px;top:903px;width:1px;height:29px;background:#3c404d"></div>
<svg class="abs" style="left:907px;top:910px" width="16" height="14" fill="#666973"><rect x="0" y="10" width="3" height="4"/><rect x="4" y="7" width="3" height="7"/><rect x="8" y="3.500" width="3" height="10.500"/><rect x="12" y="0" width="3" height="14"/></svg>
<svg class="abs" style="left:946px;top:908px" width="20" height="18" fill="none"><circle cx="10" cy="9" r="2.400" fill="#90929a"/><path d="M6.800 5.600a4.800 4.800 0 0 0 0 6.800M13.200 5.600a4.800 4.800 0 0 1 0 6.800" stroke="#6b6e78" stroke-width="1.300"/><path d="M4.500 3.800a7.400 7.400 0 0 0 0 10.400M15.500 3.800a7.400 7.400 0 0 1 0 10.400" stroke="#4d505b" stroke-width="1.200" opacity=".75"/></svg>
<div class="t" style="left:970.500px;top:911px;font-size:13px;color:#9b9ca3;letter-spacing:.3px">00:00:00</div>
</div></div>

<div id="sa"><div class="in">
<!--SA-CONTENT-->
<div class="abs" style="left:1005px;top:594px;width:500px;height:31px;background:#0078d7"></div>
<svg class="abs" style="left:1014px;top:601px" width="16" height="16" viewBox="0 0 16 16"><circle cx="8" cy="8.100" r="7.800" fill="#efe9ee"/><g fill="none" stroke-width="2.300"><path d="M3.300 10.800A5.400 5.400 0 0 1 8.600 2.700" stroke="#e8680e"/><path d="M8.600 2.700A5.400 5.400 0 0 1 12.600 11" stroke="#e512e2" stroke-width="2.800"/><path d="M12.600 11A5.400 5.400 0 0 1 3.300 10.800" stroke="#f9e012" stroke-width="2.600"/><path d="M3.100 6.500A5.400 5.400 0 0 0 3.300 10.800" stroke="#d23a10" stroke-width="1.400"/></g><circle cx="8.300" cy="8.200" r="3" fill="#9a58f0"/><circle cx="9.300" cy="7" r="1.300" fill="#5a8cf6"/><circle cx="7.800" cy="8.500" r="1.500" fill="#c8b428"/><circle cx="5" cy="14" r="1.100" fill="#3fbf3a"/><circle cx="6" cy="3.500" r="1" fill="#3fbf3a"/></svg>
<div class="t" id="satitle" style="left:1035.500px;top:603.800px;font-size:12px;color:#fff;letter-spacing:-.1px">StreamAnimations</div>
<svg class="abs" style="left:1380px;top:599px" width="112" height="20" viewBox="0 0 112 20" fill="none" stroke="#fff" stroke-width="1"><path d="M5 10.500h10"/><rect x="50.500" y="5.500" width="9" height="9" stroke="#3f97e0"/><path d="M96 5l10 10M106 5l-10 10" stroke-width="1.100"/></svg>
<div class="abs" style="left:1006px;top:625px;width:498px;height:19px;background:#fff"></div>
<div class="t sm" style="left:1013.300px;top:629px;font-size:12px;color:#000">File</div>
<div class="t sm" style="left:1045.600px;top:629px;font-size:12px;color:#000">Help</div>
<div class="abs" style="left:1006px;top:644px;width:498px;height:40px;background:#e6e6e6"></div>
<div class="abs" style="left:1010px;top:651px;width:57.500px;height:34px;background:#fafafa;border-radius:5px 5px 0 0"></div>
<div class="abs" style="left:1006px;top:680px;width:4px;height:4px;background:radial-gradient(circle at 0 0,rgba(250,250,250,0) 3.500px,#fafafa 4.200px)"></div><div class="abs" style="left:1067.500px;top:680px;width:4px;height:4px;background:radial-gradient(circle at 100% 0,rgba(250,250,250,0) 3.500px,#fafafa 4.200px)"></div>
<div class="t tab" style="left:1024.300px;top:662px;font-size:14px">Start</div>
<div class="t tab" style="left:1087.600px;top:662px;font-size:14px">Animation 1</div>
<div class="t tab" style="left:1195.700px;top:662px;font-size:14px">Animation 2</div>
<div class="t tab" style="left:1303.900px;top:662px;font-size:14px">Animation 3</div>
<div class="t tab" style="left:1412px;top:662px;font-size:14px">Animation 4</div>
<div class="abs" style="left:1151px;top:703px;width:208px;height:148px;border:1px solid #e8e8e8;border-radius:5px"></div>
<div class="t g" style="left:1156px;top:695.800px;font-size:12px;background:#fafafa;padding:0 3px;letter-spacing:.15px">Status information:</div>
<div class="abs" style="left:1161px;top:727px;width:84px;height:43px;border:1px solid #e8e8e8;border-radius:5px"></div>
<div class="t g" style="left:1166.5px;top:720.7px;font-size:12px;background:#fafafa;padding:0 2.500px">Animation 1:</div>
<div class="t on" style="left:1181px;top:745px;font-size:14px">online!</div>
<div class="abs" style="left:1265px;top:727px;width:84px;height:43px;border:1px solid #e8e8e8;border-radius:5px"></div>
<div class="t g" style="left:1270.5px;top:720.7px;font-size:12px;background:#fafafa;padding:0 2.500px">Animation 2:</div>
<div class="t on" style="left:1285px;top:745px;font-size:14px">online!</div>
<div class="abs" style="left:1161px;top:798px;width:84px;height:43px;border:1px solid #e8e8e8;border-radius:5px"></div>
<div class="t g" style="left:1166.5px;top:791.7px;font-size:12px;background:#fafafa;padding:0 2.500px">Animation 3:</div>
<div class="t on" style="left:1181px;top:816px;font-size:14px">online!</div>
<div class="abs" style="left:1265px;top:798px;width:84px;height:43px;border:1px solid #e8e8e8;border-radius:5px"></div>
<div class="t g" style="left:1270.5px;top:791.7px;font-size:12px;background:#fafafa;padding:0 2.500px">Animation 4:</div>
<div class="t on" style="left:1285px;top:816px;font-size:14px">online!</div>
<div class="abs" style="left:1008px;top:983px;width:494px;height:1px;background:#e2e2e2"></div>
<div class="abs" style="left:1193px;top:994px;width:123px;height:29px;border:1px solid #1c1c1c;border-radius:4px;background:#fdfdfd"></div>
<div class="t on" style="left:1205px;top:1001.400px;font-size:14px">stop animations</div>
</div></div>
</body>
</html>
